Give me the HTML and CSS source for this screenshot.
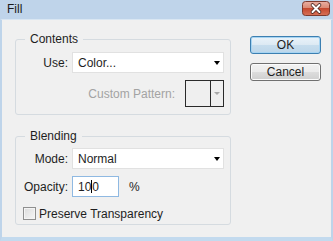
FILE: index.html
```html
<!DOCTYPE html>
<html>
<head>
<meta charset="utf-8">
<link rel="stylesheet" href="styles.css">
</head>
<body>
<div class="window">
  <div class="titlebar">
    <span class="title">Fill</span>
    <span class="close">
      <svg width="28" height="15" viewBox="0 0 28 15">
        <defs>
          <linearGradient id="cg" x1="0" y1="0" x2="0" y2="1">
            <stop offset="0" stop-color="#eab0a3"/>
            <stop offset="0.5" stop-color="#d98670"/>
            <stop offset="0.5" stop-color="#c5492f"/>
            <stop offset="1" stop-color="#d77259"/>
          </linearGradient>
        </defs>
        <rect x="0.5" y="0.5" width="27" height="14" rx="3" fill="url(#cg)" stroke="#7d3a2e"/>
        <path d="M10.5 4 L17.5 11 M17.5 4 L10.5 11" stroke="#4b2620" stroke-width="3.6" stroke-linecap="round"/>
        <path d="M10.5 4 L17.5 11 M17.5 4 L10.5 11" stroke="#ffffff" stroke-width="2" stroke-linecap="round"/>
      </svg>
    </span>
  </div>
  <div class="client">
    <div class="groups">
      <fieldset class="group contents">
        <legend>Contents</legend>
        <div class="row">
          <span class="lbl">Use:</span>
          <div class="select"><span>Color...</span><span class="arrow"></span></div>
        </div>
        <div class="row pattern">
          <span class="disabled">Custom Pattern:</span>
          <div class="swatch"><span class="swatch-box"></span><span class="swatch-drop"><span class="arrow grey"></span></span></div>
        </div>
      </fieldset>
      <fieldset class="group blending">
        <legend>Blending</legend>
        <div class="row">
          <span class="lbl">Mode:</span>
          <div class="select"><span>Normal</span><span class="arrow"></span></div>
        </div>
        <div class="row gap">
          <span class="lbl">Opacity:</span>
          <div class="input">10<span class="caret"></span>0</div>
          <span class="pct">%</span>
        </div>
        <div class="row check">
          <span class="checkbox"></span>
          <span class="check-lbl">Preserve Transparency</span>
        </div>
      </fieldset>
    </div>
    <div class="buttons">
      <button class="btn default">OK</button>
      <button class="btn">Cancel</button>
    </div>
  </div>
</div>
</body>
</html>
```
FILE: styles.css
```css
* { box-sizing: border-box; }
html, body { margin: 0; padding: 0; overflow: hidden; }
body {
  font-family: "Liberation Sans", Arial, sans-serif;
  font-size: 12px;
  color: #1e1e1e;
  background: #c2d7ec;
}
.window {
  width: 333px;
  height: 241px;
  display: flex;
  flex-direction: column;
}
.titlebar {
  height: 19px;
  flex: none;
  background: #bfd4ea;
  display: flex;
  align-items: flex-start;
  justify-content: space-between;
  padding: 1px 3px 0 7px;
}
.title {
  font-size: 12px;
  line-height: 16px;
  color: #1a1a1a;
}
.close { display: block; width: 28px; height: 15px; }
.close svg { display: block; }
.client {
  flex: 1;
  background: #f0f0f0;
  border-left: 2px solid #bed4ea;
  border-right: 2px solid #bed4ea;
  border-bottom: 4px solid #c3daee;
  border-top: 1px solid #d9e6f2;
  display: flex;
  align-items: flex-start;
  padding: 11px 0 0 13px;
}
.groups { width: 216px; display: flex; flex-direction: column; }
.group {
  margin: 0;
  border: 1px solid #d5dbe0;
  border-radius: 3px;
  padding: 5px 6px 7px 0;
  min-width: 0;
}
.group legend {
  margin-left: 9px;
  padding: 0 5px;
  line-height: 16px;
  font-size: 12px;
}
.blending { margin-top: 13px; padding-top: 4px; padding-bottom: 4px; }
.row { display: flex; align-items: center; height: 21px; }
.row.gap { margin-top: 7px; }
.lbl { width: 52px; text-align: right; margin-right: 4px; }
.select {
  width: 152px;
  height: 21px;
  background: #ffffff;
  border: 1px solid #e1e1e1;
  display: flex;
  align-items: center;
  justify-content: space-between;
  padding: 0 3px 0 5px;
}
.arrow {
  width: 0; height: 0;
  border-left: 3.5px solid transparent;
  border-right: 3.5px solid transparent;
  border-top: 4px solid #000;
}
.arrow.grey { border-top-color: #a8a8a8; border-left-width: 3px; border-right-width: 3px; border-top-width: 3px; }
.pattern { margin-top: 7px; height: 27px; justify-content: flex-end; gap: 10px; }
.disabled { color: #a3a3a3; }
.swatch {
  width: 39px;
  height: 27px;
  border: 1px solid #2a2a2a;
  display: flex;
  background: #efefef;
}
.swatch-box { width: 25px; border-right: 1px solid #2a2a2a; }
.swatch-drop { flex: 1; display: flex; align-items: center; justify-content: center; }
.input {
  width: 47px;
  height: 21px;
  background: #fff;
  border: 1px solid #8fb9e2;
  padding: 0 0 0 5px;
  display: flex;
  align-items: center;
}
.caret { display: inline-block; width: 1px; height: 13px; background: #000; }
.pct { margin-left: 10px; }
.check { margin-top: 10px; height: 13px; padding-left: 7px; }
.checkbox {
  width: 13px; height: 13px;
  border: 1px solid #8f8f8f;
  background: linear-gradient(135deg, #dcdcdc, #f6f6f6);
  box-shadow: inset 0 0 0 1px #f4f4f4;
  margin-right: 3px;
}
.buttons {
  margin-left: 19px;
  margin-top: 5px;
  display: flex;
  flex-direction: column;
  gap: 9px;
}
.btn {
  width: 71px;
  height: 18px;
  font-family: "Liberation Sans", Arial, sans-serif;
  font-size: 12px;
  color: #1e1e1e;
  border: 1px solid #707070;
  border-radius: 3px;
  background: linear-gradient(#f2f2f2 0%, #ebebeb 50%, #dddddd 50%, #cfcfcf 100%);
  padding: 0;
  line-height: 16px;
  box-shadow: inset 0 0 0 1px #fbfbfb;
}
.btn.default {
  border-color: #3c7fb1;
  background: linear-gradient(#eaf3fa 0%, #dce9f3 50%, #c7dded 50%, #bcd6ea 100%);
  box-shadow: inset 0 0 0 1px #a6d4f2;
}
```
